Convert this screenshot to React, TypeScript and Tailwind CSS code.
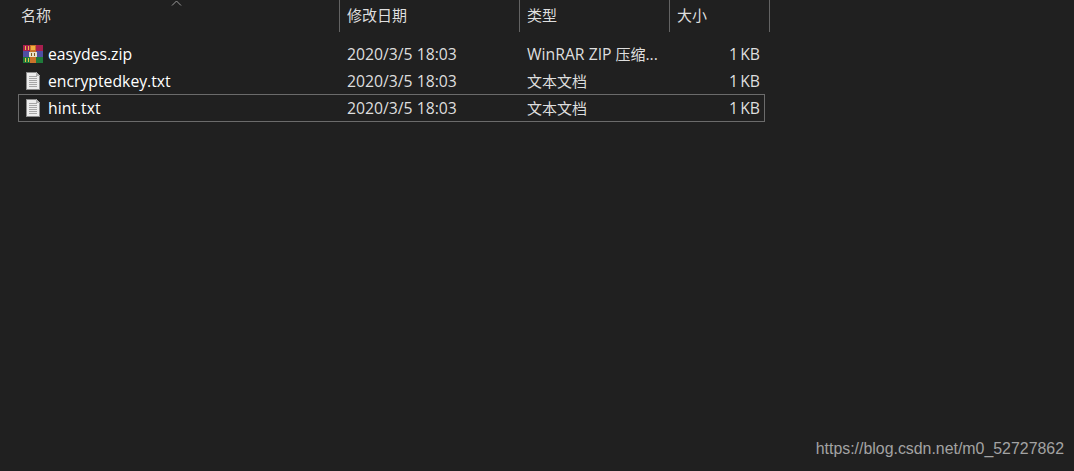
const font = "[font-family:'Open_Sans','Noto_Sans_CJK_SC',sans-serif]";

const files = [
  { name: "easydes.zip", date: "2020/3/5 18:03", type: "WinRAR ZIP", typeCjk: " 压缩", more: "...", size: "1 KB", icon: "zip" },
  { name: "encryptedkey.txt", date: "2020/3/5 18:03", type: "", typeCjk: "文本文档", more: "", size: "1 KB", icon: "txt" },
  { name: "hint.txt", date: "2020/3/5 18:03", type: "", typeCjk: "文本文档", more: "", size: "1 KB", icon: "txt", selected: true },
];

function ZipIcon() {
  return (
    <svg width="20" height="18" viewBox="0 0 20 18" shapeRendering="crispEdges">
      <rect x="0" y="0" width="20" height="6" fill="#a81f4e" />
      <rect x="0" y="6" width="20" height="6" fill="#4f4fa3" />
      <rect x="0" y="12" width="20" height="6" fill="#1f7a3a" />
      <rect x="2" y="1" width="1" height="4" fill="#e8c04a" />
      <rect x="5" y="1" width="1" height="4" fill="#e8c04a" />
      <rect x="2" y="13" width="1" height="4" fill="#e8c04a" />
      <rect x="5" y="13" width="1" height="4" fill="#e8c04a" />
      <rect x="7" y="0" width="6" height="18" fill="#c9722a" />
      <rect x="8" y="1" width="4" height="4" fill="#f0b040" />
      <rect x="6" y="7" width="8" height="5" fill="#e8e0c8" />
      <rect x="8" y="8" width="1" height="3" fill="#7a5a20" />
      <rect x="11" y="8" width="1" height="3" fill="#7a5a20" />
    </svg>
  );
}

function TxtIcon() {
  return (
    <svg width="14" height="18" viewBox="0 0 14 18" shapeRendering="crispEdges">
      <path d="M0 0H10L14 4V18H0Z" fill="#ededed" />
      <path d="M10 0L14 4H10Z" fill="#b0b0b0" />
      <path d="M0 0H10V1H1V17H13V4H14V18H0Z" fill="#8c8c8c" />
      {[4, 6, 8, 10, 12, 14].map((y) => (
        <rect key={y} x="3" y={y} width="8" height="1" fill="#a6a6a6" />
      ))}
    </svg>
  );
}

export default function App() {
  return (
    <div className={`${font} flex h-[471px] w-[1074px] flex-col overflow-hidden bg-[#202020] text-[15.75px]`}>
      <div className="relative flex h-8 text-[15px] text-[#dedede]">
        <svg className="absolute top-0 left-[171px]" width="11" height="6" viewBox="0 0 11 6" fill="none">
          <path d="M1 5.5L5.5 1L10 5.5" stroke="#9a9a9a" />
        </svg>
        <div className="w-[340px] border-r border-[#636363] pl-[21px] pt-[4px]">名称</div>
        <div className="w-[180px] border-r border-[#636363] pl-[7px] pt-[4px]">修改日期</div>
        <div className="w-[150px] border-r border-[#636363] pl-[7px] pt-[4px]">类型</div>
        <div className="w-[100px] border-r border-[#636363] pl-[7px] pt-[4px]">大小</div>
      </div>

      <div className="mt-[8px] ml-[18px] flex w-[747px] flex-col">
        {files.map((file) => (
          <div
            key={file.name}
            className={`-mb-px flex h-[28px] items-center border ${file.selected ? "border-[#6b6b6b]" : "border-transparent"}`}
          >
            <div className="flex w-[24px] shrink-0 justify-center pl-[3px]">
              {file.icon === "zip" ? <ZipIcon /> : <TxtIcon />}
            </div>
            <div className="w-[304px] pt-[2px] pl-[5px] text-white">{file.name}</div>
            <div className="w-[180px] pt-[2px] text-[#dedede]">{file.date}</div>
            <div className="w-[150px] whitespace-nowrap pt-[2px] text-[#dedede]">
              {file.type}
              <span className="text-[15px]">{file.typeCjk}</span>
              {file.more}
            </div>
            <div className="w-[87px] pt-[2px] pr-[4px] text-right text-[#dedede] [word-spacing:-2px]">{file.size}</div>
          </div>
        ))}
      </div>

      <div className="mt-auto mr-[10px] mb-[10px] self-end font-['Liberation_Sans',sans-serif] text-[15.9px] text-[#a3a3a3]">
        https://blog.csdn.net/m0_52727862
      </div>
    </div>
  );
}
